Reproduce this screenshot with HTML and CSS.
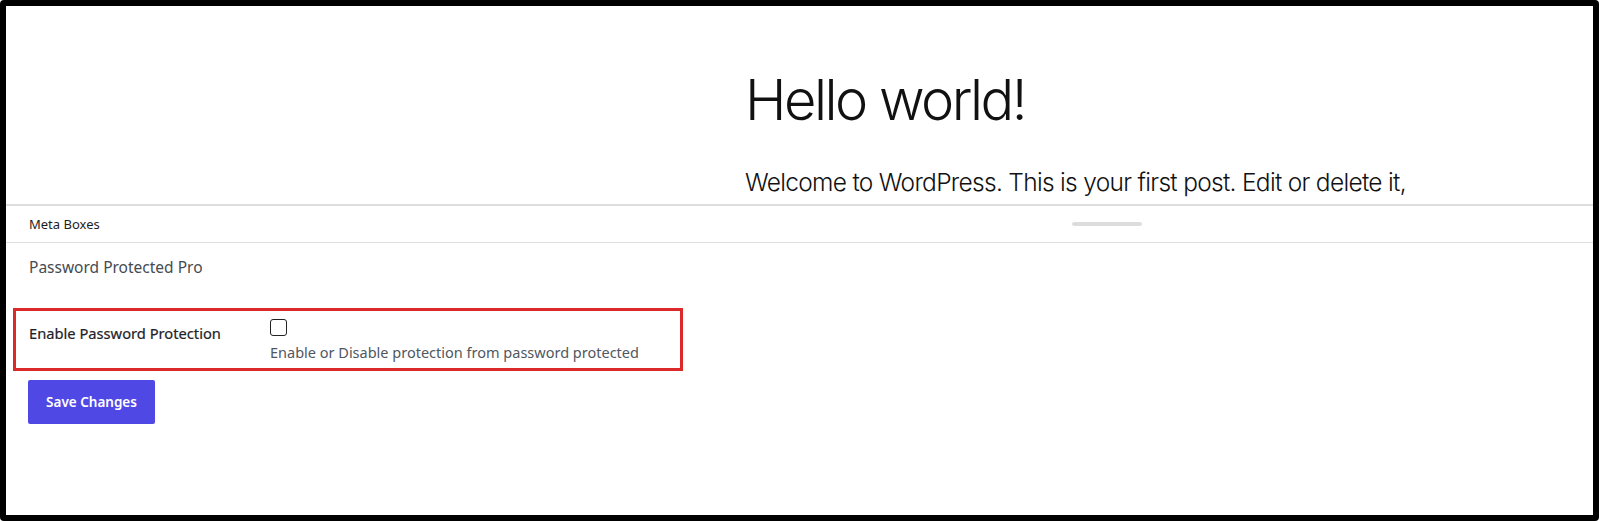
FILE: index.html
```html
<!DOCTYPE html>
<html lang="en">
<head>
    <meta charset="UTF-8">
    <meta name="viewport" content="width=device-width, initial-scale=1.0">
    <title>Edit Post</title>
    <link rel="stylesheet" href="styles.css">
</head>
<body>
    <div class="frame">
        <!-- Editor canvas -->
        <section class="editor-canvas">
            <h1 class="post-title">Hello world!</h1>
            <p class="post-body">Welcome to WordPress. This is your first post. Edit or delete it,</p>
        </section>

        <!-- Meta boxes panel -->
        <section class="meta-panel">
            <div class="meta-header">
                <span class="meta-label">Meta Boxes</span>
                <span class="resize-handle"></span>
            </div>

            <div class="meta-content">
                <h2 class="box-title">Password Protected Pro</h2>

                <div class="settings-row">
                    <label class="row-label" for="enable-protection">Enable Password Protection</label>
                    <div class="row-field">
                        <input type="checkbox" id="enable-protection" class="check">
                        <p class="description">Enable or Disable protection from password protected</p>
                    </div>
                </div>

                <button type="button" class="save-btn">Save Changes</button>
            </div>
        </section>
    </div>
</body>
</html>
```

FILE: styles.css
```css
html, body {
    margin: 0;
    padding: 0;
    height: 100%;
    background-color: #fff;
}

.frame {
    height: 100%;
    box-sizing: border-box;
    border: 6px solid #000;
    border-radius: 4px;
    display: flex;
    flex-direction: column;
    overflow: hidden;
    background-color: #fff;
}

/* Editor canvas */
.editor-canvas {
    height: 198px;
    flex-shrink: 0;
    overflow: hidden;
    padding-left: 739px;
    font-family: Inter, "Noto Sans", sans-serif;
    color: #111;
}

.post-title {
    margin: 61px 0 0;
    font-size: 56px;
    line-height: 1.2;
    font-weight: 300;
    letter-spacing: -2.5px;
}

.post-body {
    margin: 30px 0 0;
    font-size: 24.5px;
    line-height: 1.5;
    font-weight: 300;
    white-space: nowrap;
    letter-spacing: -0.7px;
}

/* Meta boxes */
.meta-panel {
    flex: 1;
    border-top: 2px solid #ddd;
    font-family: "Noto Sans", sans-serif;
}

.meta-header {
    height: 36px;
    display: grid;
    grid-template-columns: 1043px 70px;
    align-items: center;
    padding-left: 23px;
    border-bottom: 1px solid #e0e0e0;
}

.meta-label {
    font-size: 13px;
    color: #1e1e1e;
}

.resize-handle {
    height: 4px;
    border-radius: 2px;
    background-color: #ddd;
}

.meta-content {
    padding: 13px 0 0 7px;
}

.box-title {
    margin: 0 0 0 16px;
    font-size: 15.5px;
    line-height: 22px;
    font-weight: 400;
    color: #454b51;
}

.settings-row {
    width: 670px;
    box-sizing: border-box;
    margin: 30px 0 0;
    border: 3px solid #dc2a2a;
    padding: 8px 13px 6px;
    display: grid;
    grid-template-columns: 241px 1fr;
}

.row-label {
    padding-top: 4px;
    font-size: 14.7px;
    line-height: 20px;
    font-weight: 400;
    color: #1d2327;
    -webkit-text-stroke: 0.2px #1d2327;
}

.check {
    appearance: none;
    display: block;
    width: 17px;
    height: 17px;
    margin: 0;
    box-sizing: border-box;
    border: 1.5px solid #222;
    border-radius: 3px;
    background-color: #fff;
}

.description {
    margin: 6px 0 0;
    font-size: 14.5px;
    line-height: 20px;
    color: #50575e;
}

.save-btn {
    margin: 9px 0 0 15px;
    width: 127px;
    height: 44px;
    border: none;
    border-radius: 2px;
    background-color: #5048e5;
    color: #fff;
    font-family: "Noto Sans", sans-serif;
    font-size: 13.5px;
    font-weight: 600;
    cursor: pointer;
}
```
